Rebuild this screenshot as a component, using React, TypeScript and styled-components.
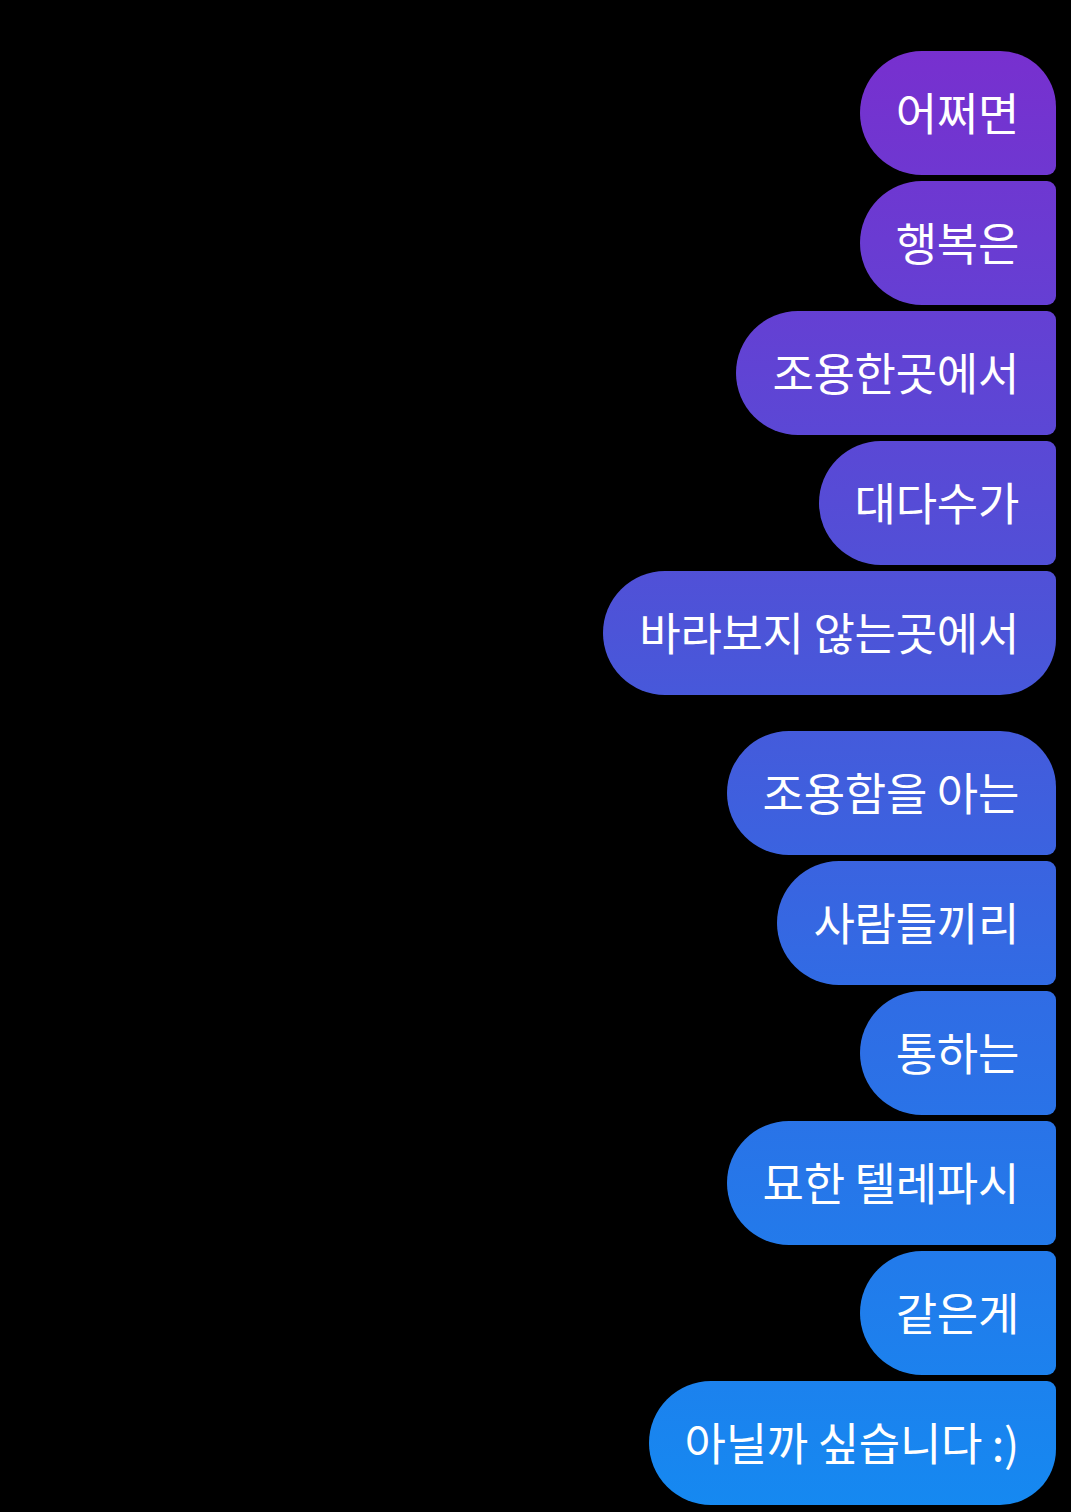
import React from "react";
import styled, { createGlobalStyle, css } from "styled-components";

const GlobalStyle = createGlobalStyle`
  html, body {
    margin: 0;
    padding: 0;
    background: #000;
  }
  body {
    font-family: "Noto Sans CJK KR", "Noto Sans", sans-serif;
  }
`;

const Page = styled.div`
  width: 1071px;
  height: 1512px;
  box-sizing: border-box;
  background: #000;
  padding: 51px 15px 0 0;
  display: flex;
  flex-direction: column;
  align-items: flex-end;
  gap: 36px;
  overflow: hidden;
`;

const Group = styled.div`
  display: flex;
  flex-direction: column;
  align-items: flex-end;
  gap: 6px;
`;

type Pos = "first" | "middle" | "last";

const Bubble = styled.div<{ $pos: Pos }>`
  height: 124px;
  box-sizing: border-box;
  padding: 0 37px 4px 36px;
  display: flex;
  align-items: center;
  color: #fff;
  font-family: "Noto Sans CJK KR", "Noto Sans", sans-serif;
  font-size: 45px;
  font-weight: 400;
  letter-spacing: -0.3px;
  white-space: pre;
  background-image: linear-gradient(
    to bottom,
    #7b2dce 0px,
    #6a3bd2 240px,
    #4c54d8 630px,
    #2f6de5 1010px,
    #1589f1 1512px
  );
  background-attachment: fixed;
  background-size: 1071px 1512px;
  border-radius: 62px 9px 9px 62px;
  ${(p) =>
    p.$pos === "first" &&
    css`
      border-top-right-radius: 56px;
    `}
  ${(p) =>
    p.$pos === "last" &&
    css`
      border-bottom-right-radius: 56px;
    `}
`;

const groups: string[][] = [
  ["어쩌면", "행복은", "조용한곳에서", "대다수가", "바라보지 않는곳에서"],
  ["조용함을 아는", "사람들끼리", "통하는", "묘한 텔레파시", "같은게", "아닐까 싶습니다 :)"],
];

export default function App() {
  return (
    <>
      <GlobalStyle />
      <Page>
        {groups.map((g, gi) => (
          <Group key={gi}>
            {g.map((t, i) => (
              <Bubble
                key={i}
                $pos={i === 0 ? "first" : i === g.length - 1 ? "last" : "middle"}
              >
                {t}
              </Bubble>
            ))}
          </Group>
        ))}
      </Page>
    </>
  );
}
